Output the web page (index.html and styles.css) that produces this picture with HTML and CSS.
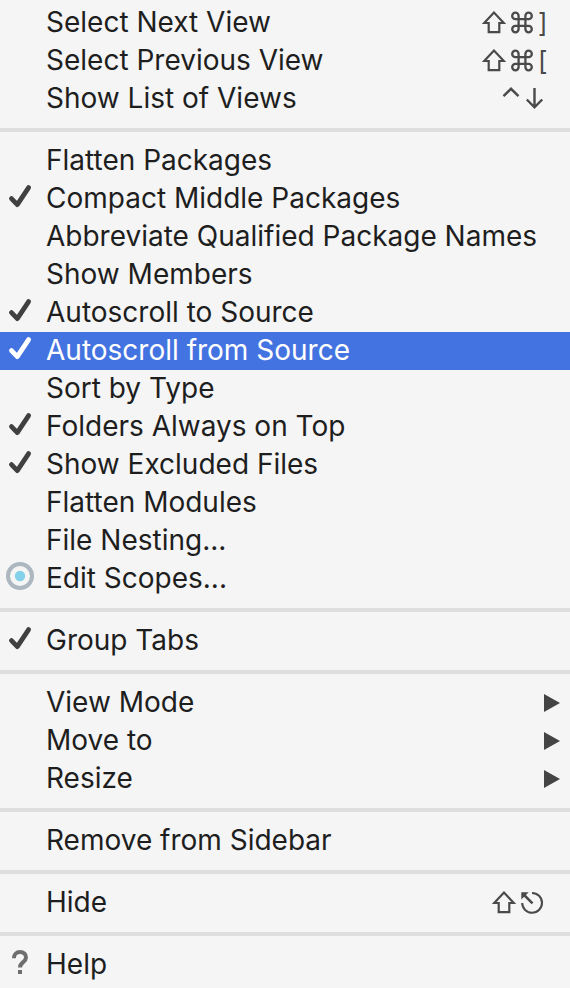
FILE: index.html
```html
<!DOCTYPE html>
<html lang="en">
<head>
<meta charset="utf-8">
<meta name="viewport" content="width=device-width, initial-scale=1">
<title>View options</title>
<link rel="stylesheet" href="styles.css">
</head>
<body>
<svg class="sprite" aria-hidden="true">
  <symbol id="check" viewBox="0 0 28 28"><path d="M5.5 16.6 11.3 22.6 22.6 5.6" fill="none" stroke="currentColor" stroke-width="4.8" stroke-linecap="round" stroke-linejoin="round"/></symbol>
  <symbol id="scope" viewBox="0 0 28 28"><circle cx="14" cy="14" r="12" fill="none" stroke="#acb7bf" stroke-width="4"/><circle cx="14" cy="14" r="5.2" fill="#84d1ea"/></symbol>
  <symbol id="help" viewBox="0 0 28 28"><path d="M7.9 10.3C7.9 6.6 10.3 4 14 4s6 2.3 6 5.5c0 4.7-6 4.7-6 10" fill="none" stroke="#6e6e6e" stroke-width="4"/><path d="M12 22h4v4h-4z" fill="#6e6e6e"/></symbol>
  <symbol id="shift" viewBox="0 0 24 24"><path d="M12 1.6 2.2 12h4.5v9.2h10.6V12h4.5z" fill="none" stroke="currentColor" stroke-width="2.2"/></symbol>
  <symbol id="command" viewBox="0 0 24 24"><path d="M8.6 8.1h6.8v6.8H8.6zM8.6 8.1H5.4a3.2 3.2 0 1 1 3.2-3.2zM15.4 8.1V4.9a3.2 3.2 0 1 1 3.2 3.2zM15.4 14.9h3.2a3.2 3.2 0 1 1-3.2 3.2zM8.6 14.9v3.2a3.2 3.2 0 1 1-3.2-3.2z" fill="none" stroke="currentColor" stroke-width="2.3"/></symbol>
  <symbol id="control" viewBox="0 0 20 24"><path d="m3.5 9.2 7.5-7.4 7.5 7.4" fill="none" stroke="currentColor" stroke-width="2.4"/></symbol>
  <symbol id="down" viewBox="0 0 20 24"><path d="M10.5 1v19.5M2.8 12.5l7.7 7.9 7.7-7.9" fill="none" stroke="currentColor" stroke-width="2.4"/></symbol>
  <symbol id="escape" viewBox="0 0 24 24"><path d="M12 2a9.9 9.9 0 1 1-9.8 10" fill="none" stroke="currentColor" stroke-width="2.1"/><path d="M12.5 12.3 4 3.8" stroke="currentColor" stroke-width="2.6"/><path d="M1.3 1.2h7.4l-7.4 7.4z" fill="currentColor"/></symbol>
  <symbol id="submenu" viewBox="0 0 16 18"><path d="M0 0 16 9 0 18z" fill="currentColor"/></symbol>
</svg>
<main class="menu" role="menu" aria-label="View options">
  <div class="group" role="group">
    <button class="item" type="button" role="menuitem"><span class="mark"></span><span class="label">Select Next View</span><span class="keys"><svg class="key"><use href="#shift"/></svg><svg class="key"><use href="#command"/></svg><span class="char">]</span></span></button>
    <button class="item" type="button" role="menuitem"><span class="mark"></span><span class="label">Select Previous View</span><span class="keys"><svg class="key"><use href="#shift"/></svg><svg class="key"><use href="#command"/></svg><span class="char">[</span></span></button>
    <button class="item" type="button" role="menuitem"><span class="mark"></span><span class="label">Show List of Views</span><span class="keys"><svg class="key narrow"><use href="#control"/></svg><svg class="key narrow"><use href="#down"/></svg></span></button>
  </div>
  <div class="group" role="group">
    <button class="item" type="button" role="menuitemcheckbox" aria-checked="false"><span class="mark"></span><span class="label">Flatten Packages</span></button>
    <button class="item" type="button" role="menuitemcheckbox" aria-checked="true"><svg class="mark"><use href="#check"/></svg><span class="label">Compact Middle Packages</span></button>
    <button class="item" type="button" role="menuitemcheckbox" aria-checked="false"><span class="mark"></span><span class="label">Abbreviate Qualified Package Names</span></button>
    <button class="item" type="button" role="menuitemcheckbox" aria-checked="false"><span class="mark"></span><span class="label">Show Members</span></button>
    <button class="item" type="button" role="menuitemcheckbox" aria-checked="true"><svg class="mark"><use href="#check"/></svg><span class="label">Autoscroll to Source</span></button>
    <button class="item selected" type="button" role="menuitemcheckbox" aria-checked="true"><svg class="mark"><use href="#check"/></svg><span class="label">Autoscroll from Source</span></button>
    <button class="item" type="button" role="menuitemcheckbox" aria-checked="false"><span class="mark"></span><span class="label">Sort by Type</span></button>
    <button class="item" type="button" role="menuitemcheckbox" aria-checked="true"><svg class="mark"><use href="#check"/></svg><span class="label">Folders Always on Top</span></button>
    <button class="item" type="button" role="menuitemcheckbox" aria-checked="true"><svg class="mark"><use href="#check"/></svg><span class="label">Show Excluded Files</span></button>
    <button class="item" type="button" role="menuitemcheckbox" aria-checked="false"><span class="mark"></span><span class="label">Flatten Modules</span></button>
    <button class="item" type="button" role="menuitem"><span class="mark"></span><span class="label">File Nesting...</span></button>
    <button class="item" type="button" role="menuitem"><svg class="mark"><use href="#scope"/></svg><span class="label">Edit Scopes...</span></button>
  </div>
  <div class="group" role="group">
    <button class="item" type="button" role="menuitemcheckbox" aria-checked="true"><svg class="mark"><use href="#check"/></svg><span class="label">Group Tabs</span></button>
  </div>
  <div class="group" role="group">
    <button class="item parent" type="button" role="menuitem" aria-haspopup="menu"><span class="mark"></span><span class="label">View Mode</span><svg class="arrow"><use href="#submenu"/></svg></button>
    <button class="item parent" type="button" role="menuitem" aria-haspopup="menu"><span class="mark"></span><span class="label">Move to</span><svg class="arrow"><use href="#submenu"/></svg></button>
    <button class="item parent" type="button" role="menuitem" aria-haspopup="menu"><span class="mark"></span><span class="label">Resize</span><svg class="arrow"><use href="#submenu"/></svg></button>
  </div>
  <div class="group" role="group">
    <button class="item" type="button" role="menuitem"><span class="mark"></span><span class="label">Remove from Sidebar</span></button>
  </div>
  <div class="group" role="group">
    <button class="item" type="button" role="menuitem"><span class="mark"></span><span class="label">Hide</span><span class="keys"><svg class="key"><use href="#shift"/></svg><svg class="key"><use href="#escape"/></svg></span></button>
  </div>
  <div class="group" role="group">
    <button class="item" type="button" role="menuitem"><svg class="mark"><use href="#help"/></svg><span class="label">Help</span></button>
  </div>
</main>
</body>
</html>
```
FILE: styles.css
```css
* {
  box-sizing: border-box;
}

body {
  margin: 0;
  background: #f5f5f5;
  font-family: Inter, "Liberation Sans", sans-serif;
}

.sprite {
  display: none;
}

.menu {
  padding: 4px 0;
}

.group + .group {
  margin-top: 10px;
  padding-top: 10px;
  border-top: 4px solid #dedede;
}

.item {
  display: flex;
  align-items: center;
  width: 100%;
  height: 38px;
  padding: 0 26px 0 6px;
  border: 0;
  background: none;
  color: #1e1e1e;
  font-family: inherit;
  font-size: 28px;
  line-height: 34px;
  text-align: left;
  white-space: nowrap;
}

.selected {
  background: #4373e0;
  color: #fff;
}

.parent {
  padding-right: 10px;
}

.mark {
  flex: none;
  align-self: flex-start;
  width: 28px;
  height: 28px;
  margin: 2px 12px 0 0;
  color: #404040;
}

.selected .mark {
  color: #fff;
}

.label {
  flex: 1;
  padding-bottom: 2px;
}

.keys {
  display: flex;
  align-items: center;
  gap: 4px;
  color: #4a4a4a;
}

.key {
  width: 24px;
  height: 24px;
}

.narrow {
  width: 20px;
}

.char {
  width: 6px;
  font-size: 26px;
}

.arrow {
  width: 16px;
  height: 18px;
  color: #444;
}
```
